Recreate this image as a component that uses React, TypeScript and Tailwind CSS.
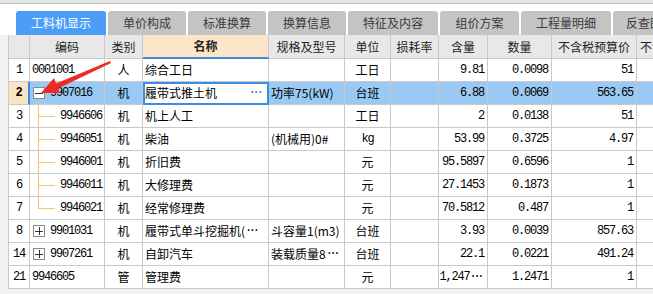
import React from "react";

type Row = {
  no: string;
  code: string;
  kind: "top" | "open" | "closed" | "child" | "last";
  cat: string;
  name: string;
  spec: string;
  unit: string;
  qty: string;
  amount: string;
  price: string;
  sel?: boolean;
};

const ROWS: Row[] = [
  { no: "1", code: "0001001", kind: "top", cat: "人", name: "综合工日", spec: "", unit: "工日", qty: "9.81", amount: "0.0098", price: "51" },
  { no: "2", code: "9907016", kind: "open", cat: "机", name: "履带式推土机", spec: "功率75(kW)", unit: "台班", qty: "6.88", amount: "0.0069", price: "563.65", sel: true },
  { no: "3", code: "9946606", kind: "child", cat: "机", name: "机上人工", spec: "", unit: "工日", qty: "2", amount: "0.0138", price: "51" },
  { no: "4", code: "9946051", kind: "child", cat: "机", name: "柴油", spec: "(机械用)0#", unit: "kg", qty: "53.99", amount: "0.3725", price: "4.97" },
  { no: "5", code: "9946001", kind: "child", cat: "机", name: "折旧费", spec: "", unit: "元", qty: "95.5897", amount: "0.6596", price: "1" },
  { no: "6", code: "9946011", kind: "child", cat: "机", name: "大修理费", spec: "", unit: "元", qty: "27.1453", amount: "0.1873", price: "1" },
  { no: "7", code: "9946021", kind: "last", cat: "机", name: "经常修理费", spec: "", unit: "元", qty: "70.5812", amount: "0.487", price: "1" },
  { no: "8", code: "9901031", kind: "closed", cat: "机", name: "履带式单斗挖掘机(···", spec: "斗容量1(m3)", unit: "台班", qty: "3.93", amount: "0.0039", price: "857.63" },
  { no: "14", code: "9907261", kind: "closed", cat: "机", name: "自卸汽车", spec: "装载质量8···", unit: "台班", qty: "22.1", amount: "0.0221", price: "491.24" },
  { no: "21", code: "9946605", kind: "top", cat: "管", name: "管理费", spec: "", unit: "元", qty: "1,247···", amount: "1.2471", price: "1" },
];

const TABS = [
  { label: "工料机显示", w: "w-[90px]" },
  { label: "单价构成", w: "w-[78px]" },
  { label: "标准换算", w: "w-[78px]" },
  { label: "换算信息", w: "w-[78px]" },
  { label: "特征及内容", w: "w-[90px]" },
  { label: "组价方案", w: "w-[79px]" },
  { label: "工程量明细", w: "w-[90px]" },
  { label: "反查图形工程量", w: "w-[110px]" },
];

const GRID = "grid grid-cols-[21px_75px_38px_126px_76px_46px_48px_49px_64px_85px_90px]";
const CELL = "border-r border-b border-[#c9c9c9] overflow-hidden whitespace-nowrap";
const MONO = "font-['Liberation_Mono',monospace] text-[12px] tracking-[-1.2px]";

// text with a trailing "···" drawn narrow, as the grid does
function Txt({ s }: { s: string }) {
  if (!s.endsWith("···")) return <>{s}</>;
  return (
    <>
      {s.slice(0, -3)}
      <span className="font-['Liberation_Mono',monospace] tracking-[-3.4px] pr-[3px]">···</span>
    </>
  );
}

function TreeBox({ open }: { open: boolean }) {
  return (
    <span className="absolute left-[3px] top-[5px] w-[12px] h-[12px] border border-[#8a8a8a] bg-white flex items-center justify-center">
      <span className="w-[8px] h-px bg-[#333]" />
      {!open && <span className="absolute w-px h-[8px] bg-[#333]" />}
    </span>
  );
}

function CodeCell({ r }: { r: Row }) {
  const bg = r.sel ? "bg-[#9acaf4]" : "bg-white";
  if (r.kind === "top")
    return <div className={`${CELL} ${bg} ${MONO} relative pl-[2px] flex items-center`}>{r.code}</div>;
  if (r.kind === "open" || r.kind === "closed")
    return (
      <div className={`${CELL} ${bg} ${MONO} relative pl-[20px] flex items-center`}>
        <TreeBox open={r.kind === "open"} />
        {r.kind === "open" && <span className="absolute left-[8px] top-[18px] bottom-0 w-px bg-[#f7c46e]" />}
        {r.code}
      </div>
    );
  return (
    <div className={`${CELL} ${bg} ${MONO} relative pl-[30px] flex items-center`}>
      <span className={`absolute left-[8px] top-0 w-px bg-[#f7c46e] ${r.kind === "last" ? "h-[11px]" : "h-[23px]"}`} />
      <span className="absolute left-[8px] top-[11px] w-[17px] h-px bg-[#f7c46e]" />
      {r.code}
    </div>
  );
}

function DataRow({ r }: { r: Row }) {
  const bg = r.sel ? "bg-[#9acaf4]" : "bg-white";
  const num = `${CELL} ${bg} ${MONO} flex items-center justify-end pr-[3px]`;
  return (
    <div className={`${GRID} h-[23px] text-[12px] text-black`}>
      <div
        className={`${CELL} ${MONO} flex items-center justify-center ${
          r.sel ? "bg-[#fde3c4] font-bold border-r-2 border-r-[#3c8ce6]" : "bg-white"
        }`}
      >
        {r.no}
      </div>
      <CodeCell r={r} />
      <div className={`${CELL} ${bg} flex items-center justify-center`}>{r.cat}</div>
      <div
        className={`${CELL} ${r.sel ? "bg-white outline-2 outline-[#3c8ce6] -outline-offset-2" : bg} relative flex items-center pl-[2px]`}
      >
        <Txt s={r.name} />
        {r.sel && (
          <span className="absolute right-[7px] top-[2px] text-[#3c8ce6] font-bold font-['Liberation_Mono',monospace] tracking-[-3px]">
            ···
          </span>
        )}
      </div>
      <div className={`${CELL} ${bg} flex items-center pl-[2px]`}>
        <Txt s={r.spec} />
      </div>
      <div className={`${CELL} ${bg} flex items-center justify-center ${r.unit === "kg" ? MONO : ""}`}>{r.unit}</div>
      <div className={`${CELL} ${bg}`} />
      <div className={num}>
        <Txt s={r.qty} />
      </div>
      <div className={num}>{r.amount}</div>
      <div className={num}>{r.price}</div>
      <div className={`${CELL} ${bg}`} />
    </div>
  );
}

function Arrow() {
  // red annotation arrow pointing at the collapse box
  return (
    <svg className="absolute left-0 top-0 pointer-events-none" width="653" height="294" viewBox="0 0 653 294">
      <polygon points="110,61 111,63 58,88.5 60,93 41,93 54,78 56,83.5" fill="#ee2a22" />
    </svg>
  );
}

export default function App() {
  return (
    <div className="relative w-[653px] h-[294px] overflow-hidden bg-[#f2f2f2] font-['Noto_Sans_CJK_SC',sans-serif]">
      <div className="h-[4px] bg-[#e6e6e6] border-b border-[#bdbdbd]" />
      <div className="bg-white pt-[7px] pl-[16px] flex gap-[2px]">
        {TABS.map((t, i) => (
          <div
            key={i}
            className={`${t.w} shrink-0 h-[24px] rounded-t-[3px] flex items-center justify-center text-[12px] whitespace-nowrap overflow-hidden ${
              i === 0 ? "bg-[#4b9df7] text-white" : "bg-[#c4c4c4] text-[#3a3a3a]"
            }`}
          >
            {t.label}
          </div>
        ))}
      </div>
      <div className="ml-[8px] border-l border-[#c9c9c9] w-max">
        <div className={`${GRID} h-[24px] text-[12px] text-[#222]`}>
          {["", "编码", "类别", "名称", "规格及型号", "单位", "损耗率", "含量", "数量", "不含税预算价"].map((h, i) => (
            <div
              key={i}
              className={`${CELL} flex items-center justify-center ${
                i === 3 ? "bg-[#fde6c8] font-bold border-b-2 border-b-[#3c8ce6]" : "bg-[#e8e8e8]"
              }`}
            >
              {h}
            </div>
          ))}
          <div className={`${CELL} bg-[#e8e8e8] flex items-center pl-[3px]`}>不含税市场价</div>
        </div>
        {ROWS.map((r) => (
          <DataRow key={r.no} r={r} />
        ))}
      </div>
      <Arrow />
    </div>
  );
}
